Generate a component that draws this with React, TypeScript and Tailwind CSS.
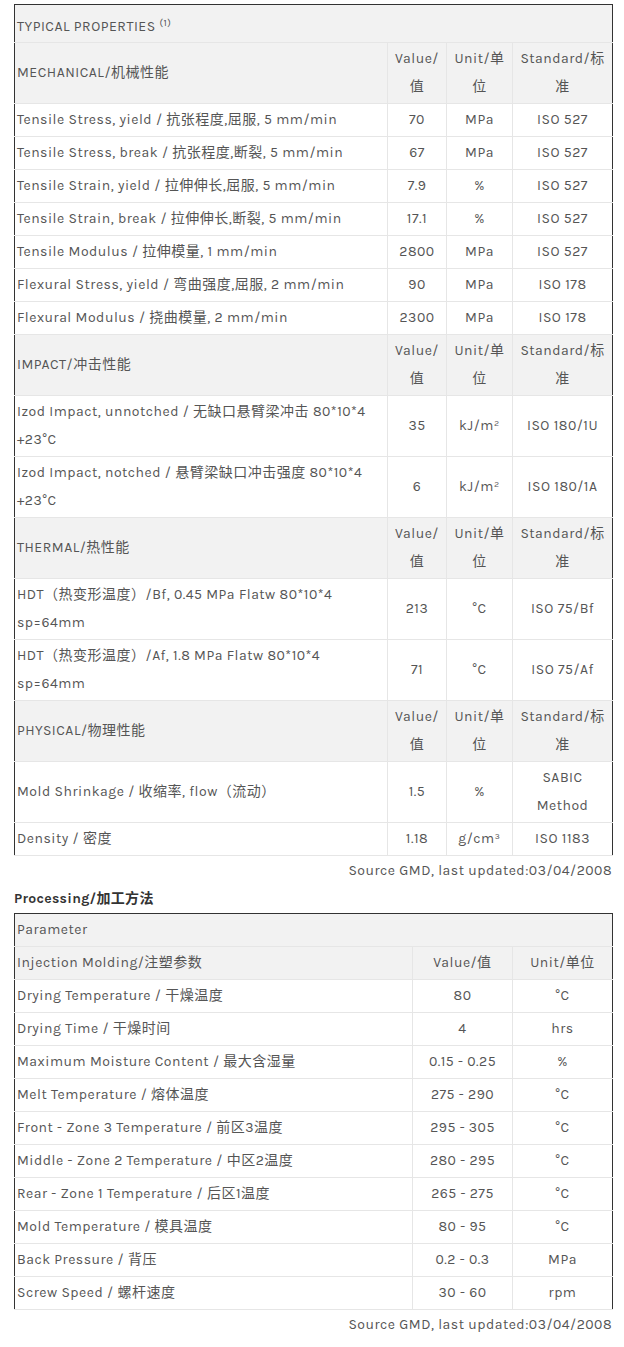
import React from "react";

const font = { fontFamily: '"Karla","Noto Sans","Noto Sans CJK SC",sans-serif' };

type Row = [React.ReactNode, React.ReactNode, string, React.ReactNode];

const groups: { title: string; rows: Row[] }[] = [
  {
    title: "MECHANICAL/机械性能",
    rows: [
      ["Tensile Stress, yield / 抗张程度,屈服, 5 mm/min", "70", "MPa", "ISO 527"],
      ["Tensile Stress, break / 抗张程度,断裂, 5 mm/min", "67", "MPa", "ISO 527"],
      ["Tensile Strain, yield / 拉伸伸长,屈服, 5 mm/min", "7.9", "%", "ISO 527"],
      ["Tensile Strain, break / 拉伸伸长,断裂, 5 mm/min", "17.1", "%", "ISO 527"],
      ["Tensile Modulus / 拉伸模量, 1 mm/min", "2800", "MPa", "ISO 527"],
      ["Flexural Stress, yield / 弯曲强度,屈服, 2 mm/min", "90", "MPa", "ISO 178"],
      ["Flexural Modulus / 挠曲模量, 2 mm/min", "2300", "MPa", "ISO 178"],
    ],
  },
  {
    title: "IMPACT/冲击性能",
    rows: [
      [<>Izod Impact, unnotched / 无缺口悬臂梁冲击 80*10*4<br />+23°C</>, "35", "kJ/m²", "ISO 180/1U"],
      [<>Izod Impact, notched / 悬臂梁缺口冲击强度 80*10*4<br />+23°C</>, "6", "kJ/m²", "ISO 180/1A"],
    ],
  },
  {
    title: "THERMAL/热性能",
    rows: [
      [<>HDT（热变形温度）/Bf, 0.45 MPa Flatw 80*10*4<br />sp=64mm</>, "213", "°C", "ISO 75/Bf"],
      [<>HDT（热变形温度）/Af, 1.8 MPa Flatw 80*10*4<br />sp=64mm</>, "71", "°C", "ISO 75/Af"],
    ],
  },
  {
    title: "PHYSICAL/物理性能",
    rows: [
      ["Mold Shrinkage / 收缩率, flow（流动）", "1.5", "%", <>SABIC<br />Method</>],
      ["Density / 密度", "1.18", "g/cm³", "ISO 1183"],
    ],
  },
];

const proc: [string, string, string][] = [
  ["Drying Temperature / 干燥温度", "80", "°C"],
  ["Drying Time / 干燥时间", "4", "hrs"],
  ["Maximum Moisture Content / 最大含湿量", "0.15 - 0.25", "%"],
  ["Melt Temperature / 熔体温度", "275 - 290", "°C"],
  ["Front - Zone 3 Temperature / 前区3温度", "295 - 305", "°C"],
  ["Middle - Zone 2 Temperature / 中区2温度", "280 - 295", "°C"],
  ["Rear - Zone 1 Temperature / 后区1温度", "265 - 275", "°C"],
  ["Mold Temperature / 模具温度", "80 - 95", "°C"],
  ["Back Pressure / 背压", "0.2 - 0.3", "MPa"],
  ["Screw Speed / 螺杆速度", "30 - 60", "rpm"],
];

const td = "border border-[#e6e6e6] px-[2px] py-[2px] align-middle";

export default function App() {
  return (
    <div className="bg-white w-[624px] min-h-[1347px] text-[14px] leading-[28px] tracking-[0.5px] text-[#555]" style={font}>
      <div className="pt-[4px] pl-[14px] pr-[12px]">
        <table className="w-[598px] border-collapse border border-[#333] table-fixed">
          <colgroup>
            <col className="w-[373px]" />
            <col className="w-[59px]" />
            <col className="w-[66px]" />
            <col className="w-[100px]" />
          </colgroup>
          <tbody>
            <tr className="bg-[#f2f2f2] h-[38px]">
              <td colSpan={4} className={"border border-[#e6e6e6] px-[2px] pt-[6px] pb-0 align-middle border-x-[#333] border-t-[#333]"}>
                TYPICAL PROPERTIES <sup className="text-[10px]">(1)</sup>
              </td>
            </tr>
            {groups.map((g) => (
              <React.Fragment key={g.title}>
                <tr className="bg-[#f2f2f2]">
                  <td className={td + " border-l-[#333]"}>{g.title}</td>
                  <td className={td + " text-center"}>Value/<br />值</td>
                  <td className={td + " text-center"}>Unit/单<br />位</td>
                  <td className={td + " text-center border-r-[#333]"}>Standard/标<br />准</td>
                </tr>
                {g.rows.map((r, i) => (
                  <tr key={g.title + i}>
                    <td className={td + " border-l-[#333]"}>{r[0]}</td>
                    <td className={td + " text-center"}>{r[1]}</td>
                    <td className={td + " text-center"}>{r[2]}</td>
                    <td className={td + " text-center border-r-[#333]"}>{r[3]}</td>
                  </tr>
                ))}
              </React.Fragment>
            ))}
          </tbody>
        </table>
        <div className="text-right w-[598px] mt-[1px]">Source GMD, last updated:03/04/2008</div>
        <div className="font-bold text-[#333] tracking-[0.3px]">Processing/加工方法</div>
        <table className="w-[598px] border-collapse border border-[#333] table-fixed">
          <colgroup>
            <col className="w-[398px]" />
            <col className="w-[100px]" />
            <col className="w-[100px]" />
          </colgroup>
          <tbody>
            <tr className="bg-[#f2f2f2]">
              <td colSpan={3} className={td + " border-x-[#333] border-t-[#333]"}>Parameter</td>
            </tr>
            <tr className="bg-[#f2f2f2]">
              <td className={td + " border-l-[#333]"}>Injection Molding/注塑参数</td>
              <td className={td + " text-center"}>Value/值</td>
              <td className={td + " text-center border-r-[#333]"}>Unit/单位</td>
            </tr>
            {proc.map((r) => (
              <tr key={r[0]}>
                <td className={td + " border-l-[#333]"}>{r[0]}</td>
                <td className={td + " text-center"}>{r[1]}</td>
                <td className={td + " text-center border-r-[#333]"}>{r[2]}</td>
              </tr>
            ))}
          </tbody>
        </table>
        <div className="text-right w-[598px] mt-[1px]">Source GMD, last updated:03/04/2008</div>
      </div>
    </div>
  );
}
